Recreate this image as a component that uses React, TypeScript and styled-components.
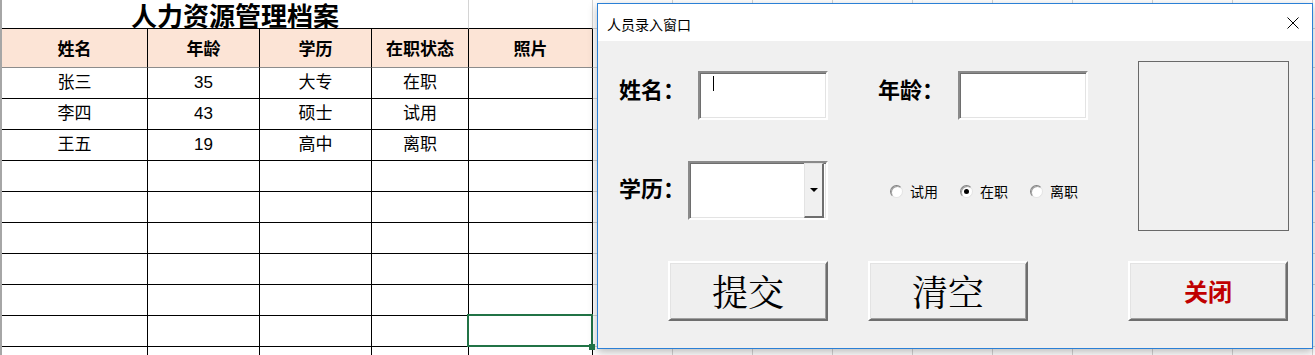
import styled, { createGlobalStyle } from 'styled-components';

const GlobalStyle = createGlobalStyle`
  html, body {
    margin: 0;
    padding: 0;
    background: #fff;
    overflow: hidden;
  }
`;

const SANS = `"Liberation Sans", "Noto Sans CJK SC", sans-serif`;
const CJK = `"Noto Sans CJK SC", "Noto Sans CJK TC", sans-serif`;
const SERIF = `"Noto Serif CJK SC", "Liberation Serif", "Noto Sans CJK SC", serif`;

const BLACK = '#000';
const GRID = '#d4d4d4';
const HEAD_LINE = '#8c8c8c';

const people = [
    ['张三', '35', '大专', '在职'],
    ['李四', '43', '硕士', '试用'],
    ['王五', '19', '高中', '离职'],
];

const EXTRA_COLS = 10;
const DATA_ROWS = 10;

const Blanks = ({ bottom }: { bottom: string }) => (
    <>
        {Array.from({ length: EXTRA_COLS }).map((_, i) => (
            <Cell key={i} $right={GRID} $bottom={bottom} />
        ))}
    </>
);

const Spreadsheet = () => (
    <Sheet>
        <TitleCell $right={GRID} $bottom={BLACK}>人力资源管理档案</TitleCell>
        <Cell $right={GRID} $bottom={BLACK} />
        <Blanks bottom={GRID} />

        {['姓名', '年龄', '学历', '在职状态', '照片'].map(h => (
            <HeaderCell key={h} $right={BLACK} $bottom={HEAD_LINE} $fill="#fce4d6">{h}</HeaderCell>
        ))}
        <Blanks bottom={GRID} />

        {Array.from({ length: DATA_ROWS }).map((_, r) => (
            <Row key={r}>
                {[0, 1, 2, 3].map(c => (
                    <Cell key={c} $right={BLACK} $bottom={BLACK}>{people[r]?.[c] ?? ''}</Cell>
                ))}
                <Cell $right={BLACK} $bottom={BLACK} $selected={r === 8} />
                <Blanks bottom={GRID} />
            </Row>
        ))}
    </Sheet>
);

const CloseIcon = () => (
    <svg width="12" height="12" viewBox="0 0 12 12">
        <path d="M0.5 0.5 L11.5 11.5 M11.5 0.5 L0.5 11.5" stroke="#000" strokeWidth="1" fill="none" />
    </svg>
);

const Radio = ({ label, checked }: { label: string; checked?: boolean }) => (
    <RadioItem>
        <RadioDot $checked={checked} />
        <RadioText>{label}</RadioText>
    </RadioItem>
);

const EntryDialog = () => (
    <Window>
        <TitleBar>
            <TitleText>人员录入窗口</TitleText>
            <CloseIcon />
        </TitleBar>
        <Body>
            <TopSection>
                <Form>
                    <FormRow>
                        <Label $width={79} $top={5}>姓名：</Label>
                        <TextBox $width={130}>
                            <Caret />
                        </TextBox>
                        <Label $width={80} $top={5} $gap={50}>年龄：</Label>
                        <TextBox $width={130} />
                    </FormRow>
                    <FormRow $tall>
                        <Label $width={69} $top={14}>学历：</Label>
                        <Combo>
                            <ComboButton>
                                <Arrow />
                            </ComboButton>
                        </Combo>
                        <RadioGroup>
                            <Radio label="试用" />
                            <Radio label="在职" checked />
                            <Radio label="离职" />
                        </RadioGroup>
                    </FormRow>
                </Form>
                <PhotoFrame />
            </TopSection>
            <ButtonRow>
                <Button>提交</Button>
                <Button>清空</Button>
                <Button $danger $gap={100}>关闭</Button>
            </ButtonRow>
        </Body>
    </Window>
);

export default function App() {
    return (
        <>
            <GlobalStyle />
            <Page>
                <Spreadsheet />
                <EntryDialog />
            </Page>
        </>
    );
}

const Page = styled.div`
    position: relative;
    width: 1315px;
    height: 355px;
    overflow: hidden;
    background: #fff;
`;

const Sheet = styled.div`
    box-sizing: border-box;
    width: 1315px;
    height: 355px;
    border-left: 2px solid #a6a6a6;
    display: grid;
    grid-template-columns: 146px 112px 112px 97px 124px repeat(${EXTRA_COLS}, 80px);
    grid-template-rows: 29px 39px repeat(${DATA_ROWS}, 31px);
    font-family: ${SANS};
    color: #000;
`;

const Row = styled.div`
    display: contents;
`;

const Cell = styled.div<{ $right: string; $bottom: string; $fill?: string; $selected?: boolean }>`
    position: relative;
    box-sizing: border-box;
    border-right: 1px solid ${p => p.$right};
    border-bottom: 1px solid ${p => p.$bottom};
    background: ${p => p.$fill ?? '#fff'};
    display: flex;
    align-items: center;
    justify-content: center;
    font-size: 17px;
    line-height: 20px;
    white-space: nowrap;

    ${p => p.$selected && `
        &::after {
            content: '';
            position: absolute;
            left: -2px;
            top: -2px;
            right: -1px;
            bottom: -1px;
            border: 2px solid #217346;
        }
        &::before {
            content: '';
            position: absolute;
            right: -3px;
            bottom: -4px;
            width: 6px;
            height: 6px;
            background: #217346;
            z-index: 1;
        }
    `}
`;

const HeaderCell = styled(Cell)`
    font-weight: bold;
    font-family: ${CJK};
`;

const TitleCell = styled(Cell)`
    grid-column: span 4;
    font-size: 26px;
    line-height: 27px;
    font-weight: bold;
    font-family: ${CJK};
    padding-top: 1px;
`;

const Window = styled.section`
    position: absolute;
    left: 597px;
    top: 3px;
    width: 716px;
    height: 346px;
    box-sizing: border-box;
    border: 1px solid #2b80d6;
    background: #f0f0f0;
    box-shadow: 0 3px 9px rgba(0, 0, 0, 0.28);
    display: flex;
    flex-direction: column;
    font-family: ${CJK};
    color: #000;
`;

const TitleBar = styled.header`
    height: 37px;
    flex: none;
    background: #fff;
    display: flex;
    align-items: center;
    justify-content: space-between;
    padding: 0 13px 0 9px;
`;

const TitleText = styled.span`
    font-size: 14px;
    line-height: 16px;
    margin-top: 2px;
`;

const Body = styled.div`
    flex: 1;
    display: flex;
    flex-direction: column;
    padding: 20px 0 0 21px;
`;

const TopSection = styled.div`
    display: flex;
    align-items: flex-start;
`;

const Form = styled.div`
    width: 469px;
    flex: none;
    display: flex;
    flex-direction: column;
    gap: 41px;
    padding-top: 10px;
`;

const FormRow = styled.div<{ $tall?: boolean }>`
    display: flex;
    align-items: flex-start;
    height: ${p => (p.$tall ? 59 : 49)}px;
`;

const Label = styled.span<{ $width: number; $top: number; $gap?: number }>`
    flex: none;
    width: ${p => p.$width}px;
    margin-left: ${p => p.$gap ?? 0}px;
    padding-top: ${p => p.$top}px;
    font-size: 22px;
    line-height: 24px;
    font-weight: bold;
    white-space: nowrap;
`;

const sunken = `
    flex: none;
    box-sizing: border-box;
    background: #fff;
    border-style: solid;
    border-width: 2px;
    border-color: #8a8a8a #ffffff #ffffff #8a8a8a;
    box-shadow: inset 1px 1px 0 #6e6e6e, inset -1px -1px 0 #e3e3e3;
`;

const TextBox = styled.div<{ $width: number }>`
    ${sunken}
    width: ${p => p.$width}px;
    height: 49px;
    padding: 3px 0 0 13px;
`;

const Caret = styled.span`
    display: block;
    width: 1px;
    height: 15px;
    background: #000;
`;

const Combo = styled.div`
    ${sunken}
    width: 140px;
    height: 59px;
    display: flex;
    justify-content: flex-end;
    padding: 0 2px 0 0;
`;

const ComboButton = styled.div`
    box-sizing: border-box;
    width: 20px;
    height: 100%;
    background: #f0f0f0;
    border-style: solid;
    border-width: 1px 2px 2px 1px;
    border-color: #e3e3e3 #6e6e6e #6e6e6e #e3e3e3;
    display: flex;
    align-items: center;
    justify-content: center;
`;

const Arrow = styled.span`
    width: 0;
    height: 0;
    border-left: 4px solid transparent;
    border-right: 4px solid transparent;
    border-top: 4px solid #000;
`;

const RadioGroup = styled.div`
    display: flex;
    flex: none;
    gap: 22px;
    align-self: center;
    margin-left: 62px;
    margin-top: 1px;
`;

const RadioItem = styled.label`
    display: flex;
    align-items: center;
    gap: 7px;
`;

const RadioDot = styled.span<{ $checked?: boolean }>`
    box-sizing: border-box;
    width: 13px;
    height: 13px;
    border-radius: 50%;
    background: #fff;
    border: 1px solid;
    border-color: #808080 #e3e3e3 #e3e3e3 #808080;
    box-shadow: inset 1px 1px 0 #a0a0a0;
    display: flex;
    align-items: center;
    justify-content: center;

    &::after {
        content: '';
        width: 5px;
        height: 5px;
        border-radius: 50%;
        background: ${p => (p.$checked ? '#000' : 'transparent')};
    }
`;

const RadioText = styled.span`
    width: 28px;
    font-size: 14px;
    line-height: 16px;
    white-space: nowrap;
`;

const PhotoFrame = styled.div`
    box-sizing: border-box;
    flex: none;
    width: 151px;
    height: 170px;
    margin-left: 50px;
    border: 1px solid #696969;
`;

const ButtonRow = styled.div`
    display: flex;
    padding: 30px 0 0 49px;
    gap: 40px;
`;

const Button = styled.button<{ $danger?: boolean; $gap?: number }>`
    box-sizing: border-box;
    flex: none;
    width: 160px;
    height: 60px;
    margin: 0 0 0 ${p => (p.$gap ? p.$gap - 40 : 0)}px;
    padding: 0;
    background: #efefef;
    border-style: solid;
    border-width: 2px;
    border-color: #ffffff #6e6e6e #6e6e6e #ffffff;
    box-shadow: inset 1px 1px 0 #e3e3e3, inset -1px -1px 0 #a0a0a0;
    font-family: ${p => (p.$danger ? CJK : SERIF)};
    font-size: ${p => (p.$danger ? 24 : 36)}px;
    font-weight: ${p => (p.$danger ? 'bold' : 'normal')};
    color: ${p => (p.$danger ? '#c00000' : '#000')};
    line-height: 1;
    display: flex;
    align-items: center;
    justify-content: center;
`;
